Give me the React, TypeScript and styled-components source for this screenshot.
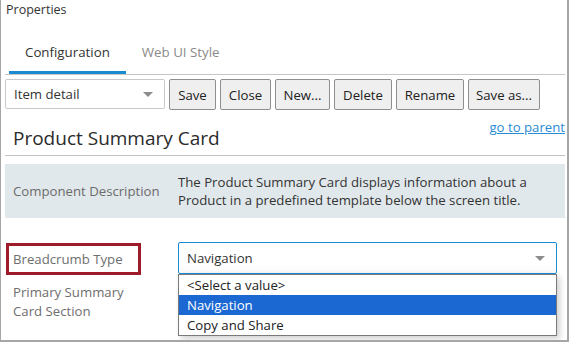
import React from "react";
import styled, { createGlobalStyle, css } from "styled-components";

const GlobalStyle = createGlobalStyle`
  body {
    margin: 0;
    background: #ffffff;
    font-family: "Open Sans", "Noto Sans", sans-serif;
    color: #333333;
  }
`;

const Frame = styled.div`
  box-sizing: border-box;
  width: 569px;
  height: 342px;
  padding: 0 2px 0 4px;
  border-left: 1px solid #a6a6a6;
  border-right: 2px solid #a6a6a6;
  border-bottom: 2px solid #a6a6a6;
  overflow: hidden;
`;

const PanelTitle = styled.div`
  font-size: 12.5px;
  line-height: 20px;
  height: 20px;
  padding-left: 1px;
`;

const TabBar = styled.div`
  display: flex;
  margin-top: 21px;
  padding-left: 4px;
  border-bottom: 1px solid #c6c6c6;
`;

const Tab = styled.div<{ active?: boolean }>(
  (props) => css`
    padding: 0 16px;
    height: 33px;
    font-size: 13.3px;
    line-height: 22px;
    color: ${props.active ? "#333333" : "#8a8a8a"};
    box-sizing: border-box;
    border-bottom: 3px solid ${props.active ? "#1a8bd0" : "transparent"};
  `
);

const Toolbar = styled.div`
  display: flex;
  align-items: flex-start;
  gap: 4px;
  margin-top: 4px;
`;

const SelectBox = styled.div<{ focused?: boolean; width?: number }>(
  (props) => css`
    box-sizing: border-box;
    position: relative;
    display: flex;
    align-items: center;
    justify-content: space-between;
    width: ${props.width ? `${props.width}px` : "auto"};
    height: ${props.focused ? 32 : 30}px;
    padding: 0 10px 0 8px;
    border: 1px solid ${props.focused ? "#1a8bd0" : "#c9c9c9"};
    border-radius: 2px;
    background: #ffffff;
    font-size: 13.2px;
    color: #333333;
    ${props.focused &&
    css`
      flex: 1;
      box-shadow: inset 0 -6px 8px -6px rgba(0, 0, 0, 0.08);
    `}
  `
);

const Caret = styled.span`
  width: 0;
  height: 0;
  border-left: 5px solid transparent;
  border-right: 5px solid transparent;
  border-top: 5px solid #8c8c8c;
  margin-right: 1px;
`;

const ToolButton = styled.button<{ width: number }>(
  (props) => css`
    box-sizing: border-box;
    width: ${props.width}px;
    height: 31px;
    padding: 0;
    border: 1px solid #8f8f8f;
    border-radius: 2px;
    background: #efefef;
    font-family: inherit;
    font-size: 13.2px;
    color: #222222;
  `
);

const HeadingRow = styled.div`
  display: flex;
  justify-content: space-between;
  align-items: flex-start;
  margin-top: 8px;
  padding: 0 0 0 8px;
  height: 37px;
  border-bottom: 1px solid #c3c3c3;
`;

const Heading = styled.h1`
  margin: 8px 0 0;
  font-size: 19px;
  font-weight: 400;
  line-height: 24px;
  color: #2b2b2b;
`;

const ParentLink = styled.a`
  font-size: 13.2px;
  line-height: 18px;
  margin-top: 0;
  color: #2a8bd3;
  text-decoration: underline;
`;

const DescriptionBox = styled.div`
  display: flex;
  align-items: center;
  margin-top: 8px;
  height: 54px;
  background: #e1e8eb;
`;

const DescLabel = styled.div`
  width: 173px;
  padding-left: 8px;
  box-sizing: border-box;
  font-size: 13.2px;
  color: #6b6b6b;
`;

const DescText = styled.div`
  flex: 1;
  font-size: 13.2px;
  line-height: 18px;
  color: #333333;
  padding-right: 20px;
`;

const Form = styled.div`
  display: flex;
  flex-direction: column;
  gap: 8px;
  margin-top: 24px;
`;

const FormRow = styled.div`
  display: flex;
  align-items: flex-start;
`;

const FieldLabel = styled.div<{ marked?: boolean }>(
  (props) => css`
    box-sizing: border-box;
    padding-left: 8px;
    font-size: 13.2px;
    line-height: 19px;
    color: #6e6e6e;
    ${props.marked
      ? css`
          margin: 1px 37px 0 1px;
          width: 135px;
          height: 32px;
          padding: 5px 0 0 4px;
          border: 3px solid #9e1b2b;
          line-height: 17px;
        `
      : css`
          width: 173px;
          padding-right: 48px;
        `}
  `
);

const FieldArea = styled.div`
  position: relative;
  flex: 1;
  margin-right: 8px;
`;

const Listbox = styled.ul`
  position: absolute;
  top: 32px;
  left: 0;
  right: 0;
  margin: 0;
  padding: 0;
  list-style: none;
  background: #ffffff;
  border: 1px solid #7a7a7a;
  box-shadow: 3px 3px 6px rgba(0, 0, 0, 0.18);
  z-index: 2;
`;

const Option = styled.li<{ selected?: boolean }>(
  (props) => css`
    height: 20px;
    line-height: 20px;
    padding-left: 8px;
    font-size: 13.2px;
    color: ${props.selected ? "#ffffff" : "#222222"};
    background: ${props.selected ? "#1c68d2" : "transparent"};
  `
);

const buttons: [string, number][] = [
  ["Save", 47],
  ["Close", 51],
  ["New...", 55],
  ["Delete", 58],
  ["Rename", 68],
  ["Save as...", 72],
];

export default function App() {
  return (
    <>
      <GlobalStyle />
      <Frame>
        <PanelTitle>Properties</PanelTitle>
        <TabBar>
          <Tab active>Configuration</Tab>
          <Tab>Web UI Style</Tab>
        </TabBar>
        <Toolbar>
          <SelectBox width={160}>
            Item detail
            <Caret />
          </SelectBox>
          {buttons.map(([label, width]) => (
            <ToolButton key={label} width={width}>
              {label}
            </ToolButton>
          ))}
        </Toolbar>
        <HeadingRow>
          <Heading>Product Summary Card</Heading>
          <ParentLink>go to parent</ParentLink>
        </HeadingRow>
        <DescriptionBox>
          <DescLabel>Component Description</DescLabel>
          <DescText>
            The Product Summary Card displays information about a Product in a
            predefined template below the screen title.
          </DescText>
        </DescriptionBox>
        <Form>
          <FormRow>
            <FieldLabel marked>Breadcrumb Type</FieldLabel>
            <FieldArea>
              <SelectBox focused>
                Navigation
                <Caret />
              </SelectBox>
              <Listbox>
                <Option>&lt;Select a value&gt;</Option>
                <Option selected>Navigation</Option>
                <Option>Copy and Share</Option>
              </Listbox>
            </FieldArea>
          </FormRow>
          <FormRow>
            <FieldLabel>Primary Summary Card Section</FieldLabel>
          </FormRow>
        </Form>
      </Frame>
    </>
  );
}
